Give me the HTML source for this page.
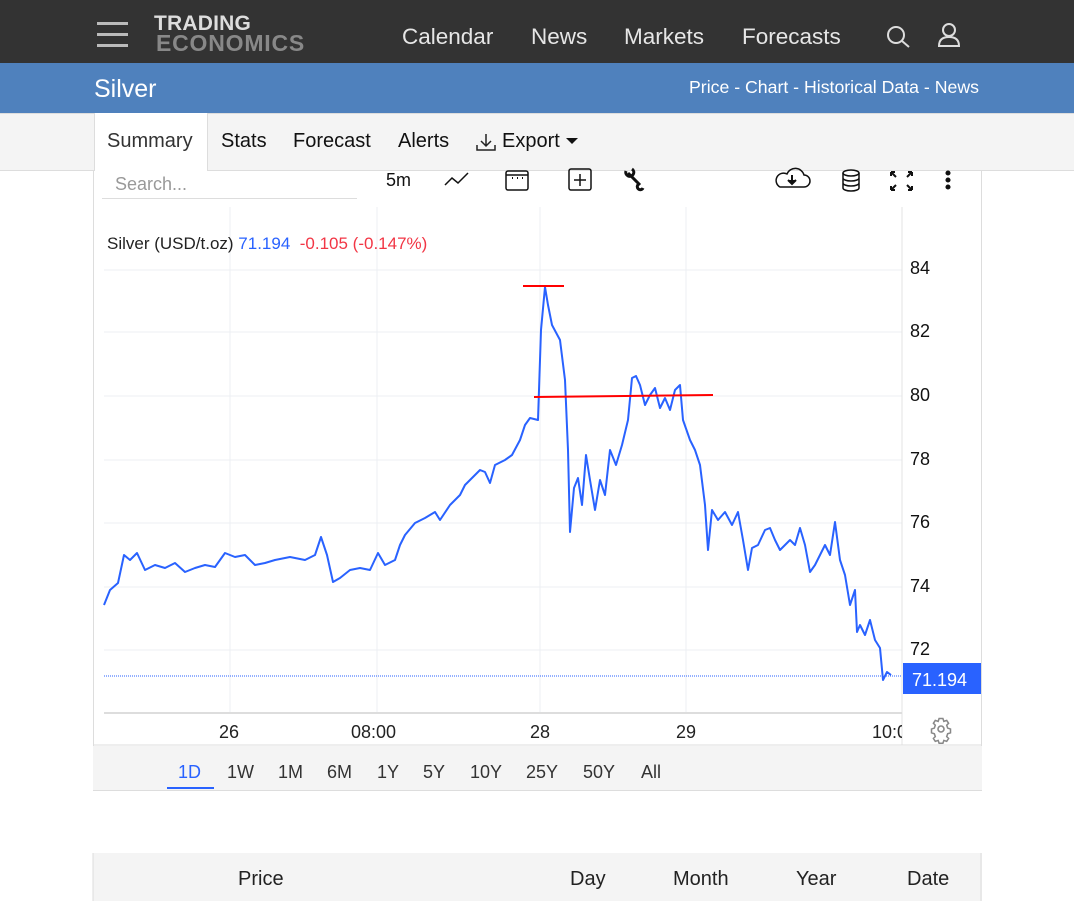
<!DOCTYPE html>
<html><head><meta charset="utf-8"><style>
*{margin:0;padding:0;box-sizing:border-box}
body{width:1074px;height:901px;overflow:hidden;background:#fff;font-family:"Liberation Sans",sans-serif;position:relative}
.abs{position:absolute}
.top{left:0;top:0;width:1074px;height:63px;background:#333}
.nav{top:24px;font-size:22.5px;color:#e6e6e6}
.blue{left:0;top:63px;width:1074px;height:50px;background:#4f81bd}
.tabs{left:0;top:113px;width:1074px;height:58px;background:#f4f4f4;border-top:1px solid #ddd;border-bottom:1px solid #ddd}
.tab{top:130px;font-size:20px;color:#111}
.yl{left:910px;font-size:18px;color:#111}
.xl{top:722px;font-size:18px;color:#222}
.rng{top:762px;font-size:18px;color:#333}
.th{top:868px;font-size:20px;color:#222}
</style></head><body>
<div class="abs top"></div>
<div class="abs" style="left:97px;top:22px;width:31px;height:3px;background:#bbb"></div>
<div class="abs" style="left:97px;top:33px;width:31px;height:3px;background:#bbb"></div>
<div class="abs" style="left:97px;top:44px;width:31px;height:3px;background:#bbb"></div>
<div class="abs" style="left:154px;top:15px;font-size:21px;font-weight:bold;color:#ddd;line-height:18px;letter-spacing:0.2px">TRADING</div>
<div class="abs" style="left:156px;top:33px;font-size:23px;font-weight:bold;color:#888;line-height:20px;letter-spacing:0.8px">ECONOMICS</div>
<div class="abs nav" style="left:402px">Calendar</div>
<div class="abs nav" style="left:531px">News</div>
<div class="abs nav" style="left:624px">Markets</div>
<div class="abs nav" style="left:742px">Forecasts</div>
<svg class="abs" style="left:885px;top:24px" width="28" height="26"><circle cx="11" cy="11" r="8" fill="none" stroke="#ddd" stroke-width="2"/><line x1="17" y1="17" x2="24" y2="23" stroke="#ddd" stroke-width="2"/></svg>
<svg class="abs" style="left:936px;top:22px" width="28" height="26"><circle cx="13" cy="8" r="6" fill="none" stroke="#ddd" stroke-width="2"/><path d="M3 24 Q3 15 13 15 Q23 15 23 24 Z" fill="none" stroke="#ddd" stroke-width="2"/></svg>
<div class="abs blue"></div>
<div class="abs" style="left:94px;top:75px;font-size:25px;color:#fff">Silver</div>
<div class="abs" style="left:689px;top:77px;font-size:17.7px;color:#fff">Price - Chart - Historical Data - News</div>
<div class="abs tabs"></div>
<div class="abs" style="left:94px;top:113px;width:114px;height:60px;background:#fff;border-left:1px solid #ddd;border-right:1px solid #ddd"></div>
<div class="abs tab" style="left:107px;color:#333">Summary</div>
<div class="abs tab" style="left:221px">Stats</div>
<div class="abs tab" style="left:293px">Forecast</div>
<div class="abs tab" style="left:398px">Alerts</div>
<svg class="abs" style="left:475px;top:132px" width="22" height="20"><path d="M11 2 V14 M6 9 L11 14 L16 9 M2 13 V18 H20 V13" fill="none" stroke="#222" stroke-width="1.5"/></svg>
<div class="abs tab" style="left:502px">Export</div>
<svg class="abs" style="left:566px;top:138px" width="12" height="8"><path d="M0 0 H12 L6 6Z" fill="#111"/></svg>
<div class="abs" style="left:93px;top:171px;width:889px;height:620px;border:1px solid #ddd;border-top:none;background:#fff"></div>
<div class="abs" style="left:115px;top:174px;font-size:18px;color:#999">Search...</div>
<div class="abs" style="left:102px;top:198px;width:255px;height:1px;background:#ddd"></div>
<div class="abs" style="left:386px;top:170px;font-size:18px;color:#111">5m</div>
<svg class="abs" style="left:440px;top:165px" width="540" height="30" fill="none" stroke="#111" stroke-width="1.5">
<path d="M5 20 L12 13 L18 18 L28 8"/>
<rect x="66" y="6" width="22" height="19" rx="2"/><line x1="66" y1="10" x2="88" y2="10"/><path d="M72 13h1M77 13h1M82 13h1" stroke-width="2"/>
<rect x="129" y="4" width="22" height="21" rx="2"/><path d="M140 9v12M134 15h12"/>
<path d="M188 8 L200 20 M186 6 a4 4 0 1 0 6 -2 M199 19 a3 3 0 1 0 4 4" stroke-width="3"/>
<path d="M340 22 H364 a6 6 0 0 0 0 -12 a9 9 0 0 0 -17 -1 a6 6 0 0 0 -7 13z"/><path d="M352 10v8M348 15l4 4 4-4" fill="#111" stroke-width="2"/>
<ellipse cx="411" cy="8" rx="8" ry="3"/><path d="M403 8v15a8 3 0 0 0 16 0V8M403 13a8 3 0 0 0 16 0M403 18a8 3 0 0 0 16 0"/>
<path d="M451 7l5 5M451 7h4M451 7v4M472 7l-5 5M472 7h-4M472 7v4M451 25l5-5M451 25h4M451 25v-4M472 25l-5-5M472 25h-4M472 25v-4" stroke-width="2"/>
<circle cx="508" cy="8" r="1.8" fill="#111"/><circle cx="508" cy="15" r="1.8" fill="#111"/><circle cx="508" cy="22" r="1.8" fill="#111"/>
</svg>
<svg class="abs" style="left:0;top:0" width="1074" height="901">
<g stroke="#eceff3" stroke-width="1">
<line x1="230" y1="207" x2="230" y2="713"/><line x1="377" y1="207" x2="377" y2="713"/><line x1="540" y1="207" x2="540" y2="713"/><line x1="686" y1="207" x2="686" y2="713"/>
<line x1="104" y1="270" x2="902" y2="270"/><line x1="104" y1="332" x2="902" y2="332"/><line x1="104" y1="396" x2="902" y2="396"/><line x1="104" y1="460" x2="902" y2="460"/><line x1="104" y1="523" x2="902" y2="523"/><line x1="104" y1="587" x2="902" y2="587"/><line x1="104" y1="650" x2="902" y2="650"/>
</g>
<line x1="902" y1="207" x2="902" y2="745" stroke="#e3e3e3"/>
<line x1="104" y1="713" x2="902" y2="713" stroke="#ddd" stroke-width="2"/>
<line x1="93" y1="745" x2="982" y2="745" stroke="#ddd"/>
<line x1="104" y1="676" x2="902" y2="676" stroke="#2962ff" stroke-width="1" stroke-dasharray="1 1"/>
<polyline fill="none" stroke="#2962ff" stroke-width="2" stroke-linejoin="round" points="104,605 110,590 118,583 124,555 130,560 137,553 145,570 155,565 165,568 175,563 185,572 195,568 205,565 215,567 225,553 235,557 245,555 255,565 265,563 275,560 290,557 305,560 315,555 321,537 327,555 333,582 340,578 350,570 360,568 370,570 378,553 385,565 395,560 400,545 405,535 415,523 425,518 435,512 440,520 450,505 460,495 465,485 472,478 480,470 485,472 490,483 495,465 505,460 512,455 520,440 525,425 530,418 538,420 541,330 545,287 548,305 552,325 560,340 565,380 568,450 570,532 574,488 578,478 582,505 586,455 590,480 595,510 600,480 605,495 610,450 616,465 622,445 628,420 632,378 636,376 640,385 645,405 650,395 655,388 660,408 665,398 670,410 675,390 680,385 683,420 690,440 695,450 700,465 705,505 708,550 712,510 718,520 725,512 732,525 738,512 743,540 748,570 752,548 758,545 765,530 770,528 775,540 780,550 790,540 795,545 800,528 805,545 810,572 815,565 820,555 825,545 830,555 835,522 840,560 845,575 850,605 855,590 857,632 860,625 865,635 870,620 875,640 880,648 883,680 887,672 891,675"/>
<line x1="523" y1="286" x2="564" y2="286" stroke="#f00" stroke-width="2"/>
<line x1="534" y1="397" x2="713" y2="395" stroke="#f00" stroke-width="2"/>
<rect x="903" y="663" width="78" height="31" fill="#2962ff"/>
<text x="912" y="686" font-size="18" fill="#fff" font-family="Liberation Sans">71.194</text>
<g transform="translate(941,729)" fill="none" stroke="#888" stroke-width="1.6"><circle r="3"/><path d="M-2-9h4l1 3 3-1 2 3-2 2 1 3 3 1v0 4l-3 1-1 3 2 2-2 3-3-1-1 3h-4l-1-3-3 1-2-3 2-2-1-3-3-1v-4l3-1 1-3-2-2 2-3 3 1z" transform="scale(0.95) translate(0,-2)"/></g>
<rect x="93" y="746" width="889" height="44" fill="#f4f4f4"/>
<line x1="167" y1="788" x2="214" y2="788" stroke="#2962ff" stroke-width="2"/>
<rect x="93" y="853" width="889" height="48" fill="#f4f4f4"/>
<line x1="93" y1="853" x2="93" y2="901" stroke="#ddd"/><line x1="981" y1="853" x2="981" y2="901" stroke="#ddd"/>
</svg>
<div class="abs" style="left:107px;top:234px;font-size:17px;color:#222">Silver (USD/t.oz) <span style="color:#2962ff">71.194</span>&nbsp; <span style="color:#f23645">-0.105 (-0.147%)</span></div>
<div class="abs yl" style="top:258px">84</div>
<div class="abs yl" style="top:321px">82</div>
<div class="abs yl" style="top:385px">80</div>
<div class="abs yl" style="top:449px">78</div>
<div class="abs yl" style="top:512px">76</div>
<div class="abs yl" style="top:576px">74</div>
<div class="abs yl" style="top:639px">72</div>
<div class="abs xl" style="left:219px">26</div>
<div class="abs xl" style="left:351px">08:00</div>
<div class="abs xl" style="left:530px">28</div>
<div class="abs xl" style="left:676px">29</div>
<div class="abs xl" style="left:872px;width:30px;overflow:hidden;white-space:nowrap">10:00</div>
<div class="abs rng" style="left:178px;color:#2962ff">1D</div>
<div class="abs rng" style="left:227px">1W</div>
<div class="abs rng" style="left:278px">1M</div>
<div class="abs rng" style="left:327px">6M</div>
<div class="abs rng" style="left:377px">1Y</div>
<div class="abs rng" style="left:423px">5Y</div>
<div class="abs rng" style="left:470px">10Y</div>
<div class="abs rng" style="left:526px">25Y</div>
<div class="abs rng" style="left:583px">50Y</div>
<div class="abs rng" style="left:641px">All</div>
<div class="abs th" style="left:238px">Price</div>
<div class="abs th" style="left:570px">Day</div>
<div class="abs th" style="left:673px">Month</div>
<div class="abs th" style="left:796px">Year</div>
<div class="abs th" style="left:907px">Date</div>
</body></html>
